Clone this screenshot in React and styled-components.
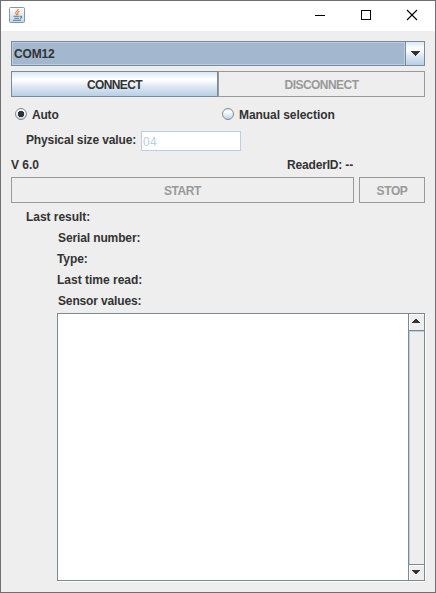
import React from "react";
import styled, { createGlobalStyle } from "styled-components";

const GlobalStyle = createGlobalStyle`
  * { box-sizing: border-box; }
  html, body { margin: 0; padding: 0; overflow: hidden; }
  body { font: bold 12px/15px "Liberation Sans", Arial, sans-serif; color: #333; }
`;

const Window = styled.div`
  width: 436px;
  height: 593px;
  background: #eee;
  border: 1px solid #6f6f6f;
  display: flex;
  flex-direction: column;
`;

const TitleBar = styled.header`
  height: 30px;
  flex: none;
  background: #fff;
  display: flex;
  align-items: flex-start;
  padding: 6px 0 0 8px;
`;

const Controls = styled.div`
  margin-left: auto;
  display: flex;
  margin-top: -6px;
`;

const Control = styled.span`
  width: 46px;
  height: 29px;
  display: flex;
  justify-content: center;
  svg { display: block; }
`;

const Content = styled.main`
  display: flex;
  flex-direction: column;
  padding: 10px;
`;

const Combo = styled.div`
  height: 25px;
  display: flex;
  border: 1px solid #7a8a99;
`;

const ComboValue = styled.div`
  flex: 1;
  background: #a3b8cf;
  border: 1px solid #b8cfe5;
  padding: 4px 0 0 1px;
`;

const ComboArrow = styled.div`
  width: 19px;
  border-left: 1px solid #7a8a99;
  background: linear-gradient(#dde8f3 0%, #fff 30%, #fff 34%, #dde8f3 60%, #b8cfe5 100%);
  svg { display: block; margin: 9px 0 0 4px; }
`;

const ButtonRow = styled.div`
  display: flex;
  gap: ${(p) => p.$gap || 0}px;
  margin-top: ${(p) => p.$top}px;
`;

const Button = styled.button`
  width: ${(p) => p.$width}px;
  height: 26px;
  padding: 2px 0 0;
  font: inherit;
  color: #333;
  border: 1px solid #7a8a99;
  background: linear-gradient(#dde8f3 0%, #fff 30%, #fff 34%, #dde8f3 60%, #b8cfe5 100%);
  &:disabled {
    color: #999;
    background: #eee;
    border-color: #999;
  }
`;

const Options = styled.div`
  display: grid;
  grid-template-columns: 207px 207px;
  padding: 11px 0 0 4px;
`;

const Option = styled.label`
  display: flex;
  gap: 5px;
  height: 15px;
  svg { flex: none; }
`;

const SizeRow = styled.div`
  display: flex;
  height: 20px;
  margin-top: 8px;
  padding-left: 15px;
`;

const SizeLabel = styled.label`
  width: 115px;
  padding-top: 2px;
`;

const Field = styled.div`
  width: 100px;
  height: 20px;
  border: 1px solid #b8cfe5;
  background: #fff;
  color: #b8cfe5;
  font-weight: normal;
  letter-spacing: 0.3px;
  padding: 3px 0 0 1px;
`;

const Status = styled.div`
  display: grid;
  grid-template-columns: 276px 1fr;
  height: 15px;
  margin-top: 7px;
`;

const Text = styled.span`
  display: inline-block;
  white-space: nowrap;
  letter-spacing: ${(p) => p.$track || 0}px;
  height: 15px;
`;

const ResultTitle = styled.div`
  height: 15px;
  margin: 7px 0 0 15px;
`;

const Results = styled.section`
  display: flex;
  flex-direction: column;
  margin-left: 46px;
`;

const ResultLabel = styled.div`
  height: 15px;
  margin-top: 6px;
  padding-left: ${(p) => p.$indent || 0}px;
`;

const TextArea = styled.div`
  display: flex;
  width: 368px;
  height: 268px;
  margin-top: 4px;
  border: 1px solid #7a8a99;
  background: #fff;
  box-shadow: 1px 1px #fff;
`;

const Page = styled.div`
  flex: 1;
`;

const ScrollBar = styled.div`
  width: 16px;
  display: flex;
  flex-direction: column;
  border-left: 1px solid #7a8a99;
  background: #eee;
`;

const ScrollButton = styled.div`
  height: ${(p) => p.$height}px;
  flex: none;
  border-top: 1px solid #fff;
  border-left: 1px solid #fff;
  svg { display: block; margin: 4px 0 0 2px; }
`;

const Track = styled.div`
  flex: 1;
  border: solid #7a8a99;
  border-width: 1px 0;
  box-shadow: inset 1px 1px #b8cfe5;
`;

function JavaIcon() {
  return (
    <svg width="16" height="16" viewBox="0 0 16 16" fill="none">
      <defs>
        <linearGradient id="cup-tile" x1="0" y1="0" x2="0" y2="1">
          <stop offset="0" stopColor="#fff" />
          <stop offset="1" stopColor="#c8d5e0" />
        </linearGradient>
      </defs>
      <rect x=".5" y=".5" width="15" height="15" rx="1" fill="url(#cup-tile)" stroke="#8299ad" />
      <path d="M9.3 2C9.4 4 6 4.4 6.7 6.3L8 8.2M10.5 4.2C8.6 5 8.3 5.8 8.9 6.8L8.4 8" stroke="#e8833a" strokeWidth="1.2" />
      <path d="M4.5 9.2H10.5M5.5 11.2H10M4 13.2H12M11 9.3c2.4-.5 2 1.7 0 2.1" stroke="#507ba1" strokeWidth="1.1" />
    </svg>
  );
}

function Radio({ checked }) {
  return (
    <svg width="12" height="12" viewBox="0 0 12 12">
      <defs>
        <linearGradient id="radio-face" x1="0" y1="0" x2="0" y2="1">
          <stop offset="0" stopColor="#dde8f3" />
          <stop offset=".3" stopColor="#fff" />
          <stop offset="1" stopColor="#b8cfe5" />
        </linearGradient>
      </defs>
      <circle cx="6" cy="6" r="5.5" fill="url(#radio-face)" stroke="#7a8a99" />
      {checked && <path d="M4 3H8V4H9V8H8V9H4V8H3V4H4Z" fill="#333" />}
    </svg>
  );
}

export default function App() {
  return (
    <>
      <GlobalStyle />
      <Window>
        <TitleBar>
          <JavaIcon />
          <Controls>
            <Control>
              <svg width="12" height="29" shapeRendering="crispEdges"><path d="M1 14h10v1H1z" fill="#000" /></svg>
            </Control>
            <Control>
              <svg width="12" height="29" shapeRendering="crispEdges"><path d="M1.5 9.5h9v9h-9z" fill="none" stroke="#000" /></svg>
            </Control>
            <Control>
              <svg width="12" height="29"><path d="M1 9l10 10M11 9L1 19" stroke="#000" strokeWidth="1.1" /></svg>
            </Control>
          </Controls>
        </TitleBar>
        <Content>
          <Combo>
            <ComboValue><Text $track={-0.15}>COM12</Text></ComboValue>
            <ComboArrow>
              <svg width="10" height="5" shapeRendering="crispEdges"><path d="M0 0h10L5 5z" fill="#333" /></svg>
            </ComboArrow>
          </Combo>
          <ButtonRow $top={5}>
            <Button $width={207}><Text $track={-0.65}>CONNECT</Text></Button>
            <Button $width={207} disabled><Text $track={-0.55}>DISCONNECT</Text></Button>
          </ButtonRow>
          <Options>
            <Option><Radio checked /><Text $track={-0.2}>Auto</Text></Option>
            <Option><Radio /><Text $track={-0.06}>Manual selection</Text></Option>
          </Options>
          <SizeRow>
            <SizeLabel><Text $track={-0.13}>Physical size value:</Text></SizeLabel>
            <Field>04</Field>
          </SizeRow>
          <Status>
            <Text>V 6.0</Text>
            <Text $track={-0.17}>ReaderID: --</Text>
          </Status>
          <ButtonRow $top={4} $gap={5}>
            <Button $width={343} disabled><Text $track={-0.4}>START</Text></Button>
            <Button $width={66} disabled><Text $track={-0.4}>STOP</Text></Button>
          </ButtonRow>
          <ResultTitle><Text $track={-0.05}>Last result:</Text></ResultTitle>
          <Results>
            <ResultLabel $indent={1}><Text $track={-0.12}>Serial number:</Text></ResultLabel>
            <ResultLabel><Text $track={-0.1}>Type:</Text></ResultLabel>
            <ResultLabel><Text>Last time read:</Text></ResultLabel>
            <ResultLabel $indent={1}><Text $track={-0.14}>Sensor values:</Text></ResultLabel>
            <TextArea>
              <Page />
              <ScrollBar>
                <ScrollButton $height={16}>
                  <svg width="8" height="4" shapeRendering="crispEdges"><path d="M3 0h2v1h1v1h1v1h1v1H0V3h1V2h1V1h1z" fill="#333" /></svg>
                </ScrollButton>
                <Track />
                <ScrollButton $height={15}>
                  <svg width="8" height="4" shapeRendering="crispEdges"><path d="M0 0h8v1H7v1H6v1H5v1H3V3H2V2H1V1H0z" fill="#333" /></svg>
                </ScrollButton>
              </ScrollBar>
            </TextArea>
          </Results>
        </Content>
      </Window>
    </>
  );
}
